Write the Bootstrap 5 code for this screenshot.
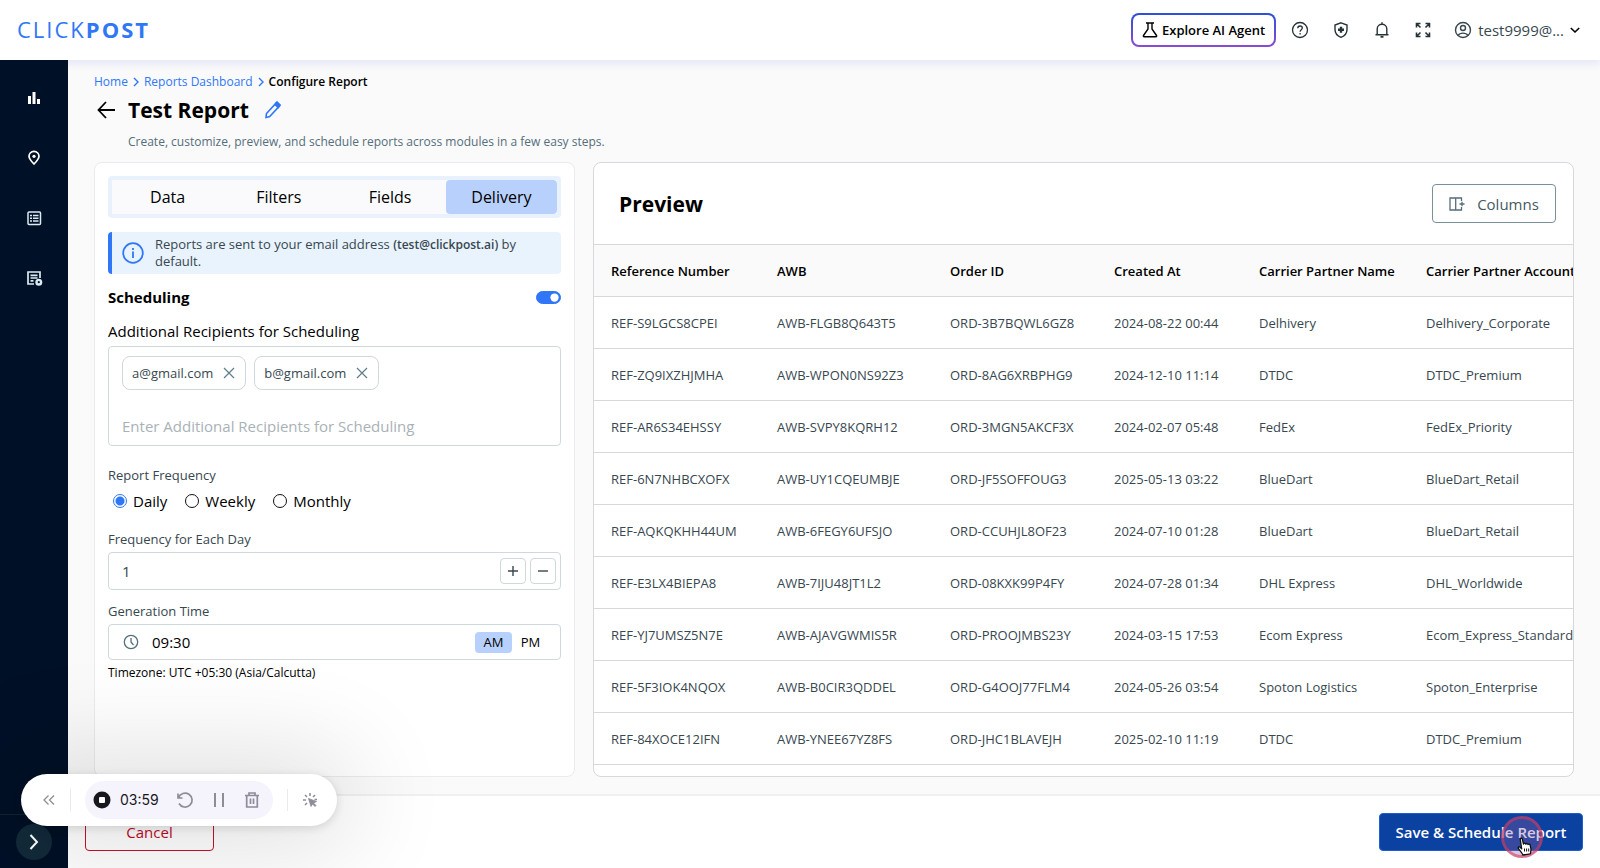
<!DOCTYPE html>
<html lang="en">
<head>
<meta charset="utf-8">
<meta name="viewport" content="width=device-width, initial-scale=1">
<title>Configure Report</title>
<link href="https://cdn.jsdelivr.net/npm/bootstrap@5.3.0/dist/css/bootstrap.min.css" rel="stylesheet">
<style>
:root { --ink: #37474f; --brand: #2f77f6; --line: #cfd8dc; --navy: #001026; }
body { font-family: "Open Sans", "Noto Sans", sans-serif; font-size: 14px; line-height: 20px; color: #000; background: #fafafa; }
a { text-decoration: none; color: var(--brand); }
svg { display: block; flex: none; }
button { color: inherit; }
.plain { background: none; border: 0; padding: 0; }
.shell { height: 100vh; }
.topbar { height: 60px; padding: 0 20px 0 17px; background: #fff; position: relative; z-index: 2; box-shadow: 0 4px 8px #e4e6f7; }
.logo { font-size: 22px; line-height: 30px; letter-spacing: 2px; font-weight: 400; padding-bottom: 2px; }
.logo b { font-weight: 700; }
.tools { gap: 21px; color: #263238; }
.explore { height: 34px; border: 2px solid transparent; border-radius: 8px; background: linear-gradient(#fff, #fff) padding-box, linear-gradient(#2b50d8, #8a4bd0) border-box; font-size: 13px; font-weight: 600; padding: 0 9px; gap: 4px; color: #000; margin-right: -7px; }
.account { font-size: 15px; gap: 6px; color: var(--ink); }
.rail { width: 68px; background: var(--navy); color: #fff; padding-top: 28px; position: relative; z-index: 3; }
.rail-list { gap: 40px; }
.rail-foot { border-top: 1px solid #0d2434; height: 54px; padding-top: 9px; }
.round { width: 36px; height: 36px; border-radius: 50%; background: #122a3a; color: #fff; }
.page { padding: 13px 26px 17px; }
.crumbs { font-size: 12px; line-height: 18px; gap: 4px; }
.title { font-size: 21px; line-height: 30px; font-weight: 700; margin-left: 10px; }
.hint { font-size: 12px; line-height: 18px; color: #546e7a; padding-left: 34px; }
.panes { gap: 18px; margin-top: 11px; }
.pane { background: #fff; border: 1px solid #e9ebef; border-radius: 8px; }
.pane-form { flex: 0 0 481px; padding: 13px; }
.pane-view { border-color: #d6d8dc; min-width: 0; overflow: hidden; }
.tabs { border: 4px solid #e9f2fc; border-radius: 4px; background: #fafafc; }
.tabs button { font-size: 16px; line-height: 22px; height: 34px; border-radius: 4px; }
.tabs .active { background: #b8d1fc; }
.notice { margin-top: 14px; height: 42px; background: #e9f3fd; border-left: 4px solid var(--brand); border-radius: 4px; color: var(--ink); font-size: 13px; line-height: 17px; padding: 0 20px 0 10px; gap: 11px; }
.mail { font-size: 12px; font-weight: 600; }
.subhead { font-size: 15px; line-height: 22px; font-weight: 700; margin: 12px 0; }
.form-switch .form-check-input.slide { width: 25px; height: 13px; margin: 0; background-color: var(--brand); border-color: var(--brand); box-shadow: none; }
.lbl { font-size: 15px; line-height: 22px; }
.lbl-sm { font-size: 13px; line-height: 18px; color: var(--ink); }
.box { border: 1px solid var(--line); border-radius: 4px; }
.box input { border: 0; outline: 0; background: none; min-width: 0; padding: 0; }
.recipients { height: 100px; padding: 9px 13px 8px; margin-top: 4px; }
.recipients input { font-size: 15px; line-height: 22px; }
.recipients input::placeholder { color: #a9b2b7; }
.chip { height: 34px; border: 1px solid var(--line); border-radius: 8px; padding: 0 10px 0 9px; gap: 10px; font-size: 13px; color: var(--ink); }
.radios { gap: 18px; font-size: 15px; line-height: 22px; padding-left: 5px; margin: 4px 0 18px; }
.radios label { gap: 6px; }
.radios input { appearance: none; width: 14px; height: 14px; border: 1px solid #111; border-radius: 50%; margin: 0; outline: 0; }
.radios input:checked { border: 1px solid var(--brand); background: radial-gradient(circle, var(--brand) 0 4px, #fff 5px); }
.freq-legend { margin-bottom: 6px; }
.stepper { height: 38px; padding: 0 4px 0 13px; gap: 4px; margin-top: 4px; }
.stepper input { font-size: 15px; color: var(--ink); }
.step { width: 26px; height: 26px; border: 1px solid var(--line); border-radius: 4px; color: var(--ink); }
.clock { height: 36px; padding: 0 11px 0 14px; margin-top: 4px; }
.clock input { font-size: 15px; margin-left: 13px; }
.ampm { font-size: 13px; font-weight: 500; height: 21px; line-height: 20px; width: 37px; border-radius: 4px; }
.ampm.on { background: #b8d1fc; }
.zone { font-size: 12px; line-height: 18px; margin-top: 4px; }
.view-head { padding: 0 17px 0 25px; height: 81px; flex: none; }
.view-head h2 { font-size: 21px; line-height: 30px; font-weight: 700; }
.cols-btn { width: 124px; height: 39px; border: 1px solid #78909c; border-radius: 4px; background: #fff; color: #455a64; font-size: 15px; gap: 12px; }
.grid-table { width: 1120px; table-layout: fixed; font-size: 13px; margin: 0; white-space: nowrap; }
.grid-table th, .grid-table td { height: 52px; padding: 0 0 0 17px; border-top: 1px solid #d6d8dc; vertical-align: middle; }
.grid-table th { background: #fafafa; font-weight: 600; }
.grid-table td { color: #37474f; }
.grid-table tbody { border-bottom: 1px solid #d6d8dc; }
.actions { height: 74px; background: #fff; border-top: 2px solid #f0f0f2; padding: 0 17px; }
.cancel { width: 129px; height: 38px; border: 1px solid #c8102e; border-radius: 4px; background: none; color: #c00a26; font-size: 15px; font-weight: 500; }
.save { width: 204px; height: 38px; border: 1px solid #1d5fd0; border-radius: 4px; background: #0b41a0; color: #fff; font-size: 15px; font-weight: 600; }
.ring { position: absolute; width: 42px; height: 42px; right: 40px; top: 3px; border: 3px solid #d63a5e99; border-radius: 50%; background: #8c5a9c55; pointer-events: none; }
.hand { position: absolute; right: 50px; top: 24px; pointer-events: none; }
.recorder { position: absolute; left: 21px; bottom: 42px; z-index: 5; height: 52px; width: 316px; background: #fff; border-radius: 26px; box-shadow: 0 0 100px 20px #0002, 0 2px 10px #0002; padding: 0 19px 0 21px; color: #8d8c99; }
.pill { background: #f5f3fc; border-radius: 19px; height: 38px; width: 188px; padding: 0 8px; gap: 17px; }
.pill time { color: #18181f; font-family: Inter, "Open Sans", sans-serif; font-size: 14px; margin-left: -8px; }
.divide { width: 1px; height: 22px; background: #e9e9ef; }
</style>
</head>
<body>
<svg class="d-none" aria-hidden="true">
  <symbol id="sep" viewBox="0 0 8 12"><path d="M2 2l4 4-4 4" fill="none" stroke="#2f77f6" stroke-width="1.4"/></symbol>
  <symbol id="x" viewBox="0 0 12 12"><path d="M1 1l10 10M11 1L1 11" stroke="#607d8b" stroke-width="1.2"/></symbol>
</svg>
<div class="shell d-flex flex-column overflow-hidden position-relative">
  <header class="topbar d-flex align-items-center justify-content-between">
    <a href="#" class="logo">CLICK<b>POST</b></a>
    <div class="tools d-flex align-items-center">
      <button class="explore d-flex align-items-center"><svg width="16" height="16" viewBox="0 0 16 16" fill="none" stroke="#000" stroke-width="1.4"><path d="M4 1h8M6 1v6L1.500 13.500a.8.800 0 0 0 .7 1.300h11.600a.8.800 0 0 0 .7-1.300L10 7V1"/></svg>Explore AI Agent</button>
      <button class="plain" aria-label="Help"><svg width="20" height="20" viewBox="0 0 20 20" fill="none" stroke="currentColor" stroke-width="1.300"><circle cx="10" cy="10" r="7.500"/><path d="M7.800 8.200c0-3 4.500-2.800 4.500-.2 0 1.600-2.200 1.800-2.200 3.700M10.100 13v1.500"/></svg></button>
      <button class="plain" aria-label="Security"><svg width="20" height="20" viewBox="0 0 20 20" fill="none" stroke="currentColor" stroke-width="1.400"><path d="M10 2.800l6 2.200v4.500c0 3.800-2.500 6.500-6 7.800-3.500-1.300-6-4-6-7.800V5z"/><path d="M10 6.800v6M7 9.800h6" stroke-width="2.400"/></svg></button>
      <button class="plain" aria-label="Notifications"><svg width="20" height="20" viewBox="0 0 20 20" fill="none" stroke="currentColor" stroke-width="1.400"><path d="M3.500 14.800h13M5.200 14.500V9c0-6.300 9.600-6.300 9.600 0v5.500M10 2.300v2"/><path d="M8.500 16.800h3" stroke-width="1.800"/></svg></button>
      <button class="plain" aria-label="Full screen"><svg width="20" height="20" viewBox="0 0 20 20" fill="none" stroke="currentColor" stroke-width="1.600"><path d="M3.500 7.500v-4h4M3.500 3.500l4 4M12.500 3.500h4v4M16.500 3.500l-4 4M3.500 12.500v4h4M3.500 16.500l4-4M16.500 12.500v4h-4M16.500 16.500l-4-4"/></svg></button>
      <button class="plain account d-flex align-items-center"><svg width="18" height="18" viewBox="0 0 18 18" fill="none" stroke="currentColor" stroke-width="1.400"><circle cx="9" cy="9" r="7.500"/><circle cx="9" cy="7" r="2.500"/><path d="M4 14.500c2-3.200 8-3.200 10 0"/></svg>test9999@...<svg width="10" height="10" viewBox="0 0 10 10" fill="none" stroke="#000" stroke-width="1.600"><path d="M.8 3L5 7l4.200-4"/></svg></button>
    </div>
  </header>
  <div class="d-flex flex-fill overflow-hidden">
    <nav class="rail d-flex flex-column justify-content-between flex-shrink-0" aria-label="Main">
      <div class="rail-list d-flex flex-column align-items-center">
        <a href="#" aria-label="Analytics"><svg width="20" height="20" viewBox="0 0 20 20" fill="#fff"><path d="M4 8h3v8H4zM8.500 4h3v12h-3zM13 11h3v5h-3z"/></svg></a>
        <a href="#" aria-label="Tracking"><svg width="20" height="20" viewBox="0 0 20 20" fill="none" stroke="#fff" stroke-width="1.700"><path d="M10 16c-3-3-5-5.200-5-7.700a5 5 0 0 1 10 0c0 2.500-2 4.700-5 7.700z"/><circle cx="10" cy="8.300" r="1.600" fill="#fff" stroke="none"/></svg></a>
        <a href="#" aria-label="Orders"><svg width="20" height="20" viewBox="0 0 20 20" fill="none" stroke="#dcebf2" stroke-width="1.500"><rect x="4" y="4" width="12.500" height="12.500" rx="1"/><path d="M6 7.500h2M9 7.500h5.500M6 10.300h2M9 10.300h5.500M6 13h2M9 13h5.500"/></svg></a>
        <a href="#" aria-label="Reports"><svg width="20" height="20" viewBox="0 0 20 20" fill="none" stroke="#dcebf2" stroke-width="1.700"><path d="M10 16H4V4h12v6M6.500 7.300h7M6.500 10h7M6.500 12.800h3"/><circle cx="14.800" cy="14.200" r="2.300" stroke-width="2.400"/></svg></a>
      </div>
      <div class="rail-foot d-flex justify-content-center"><button class="plain round d-flex align-items-center justify-content-center" aria-label="Expand menu"><svg width="10" height="16" viewBox="0 0 10 16" fill="none" stroke="#fff" stroke-width="2"><path d="M1.500 1l6.500 7-6.500 7"/></svg></button></div>
    </nav>
    <div class="d-flex flex-column flex-fill overflow-hidden">
      <main class="page d-flex flex-column flex-fill overflow-hidden">
        <nav class="crumbs d-flex align-items-center" aria-label="Breadcrumb"><a href="#">Home</a><svg width="8" height="12"><use href="#sep"/></svg><a href="#">Reports Dashboard</a><svg width="8" height="12"><use href="#sep"/></svg><span class="fw-semibold">Configure Report</span></nav>
        <div class="d-flex align-items-center mt-1">
          <button class="plain" aria-label="Back"><svg width="24" height="24" viewBox="0 0 24 24" fill="none" stroke="#000" stroke-width="1.800"><path d="M12 4l-7.500 8 7.500 8M4.500 12H21"/></svg></button>
          <h1 class="title mb-0 me-3">Test Report</h1>
          <button class="plain" aria-label="Rename"><svg width="16" height="18" viewBox="0 0 16 18" fill="none" stroke="#2f77f6" stroke-width="1.600"><path d="M1 16.500l.5-4L11 2.200l3.200 3L4.700 15.500z"/><path d="M10 3.500L12 1l3.200 3-2 2.500z" fill="#2f77f6"/></svg></button>
        </div>
        <p class="hint mb-0 mt-2">Create, customize, preview, and schedule reports across modules in a few easy steps.</p>
        <div class="panes d-flex flex-fill overflow-hidden">
          <section class="pane pane-form overflow-hidden">
            <div class="tabs d-flex" role="tablist">
              <button class="plain flex-fill w-25" role="tab">Data</button><button class="plain flex-fill w-25" role="tab">Filters</button><button class="plain flex-fill w-25" role="tab">Fields</button><button class="plain flex-fill w-25 active" role="tab" aria-selected="true">Delivery</button>
            </div>
            <div class="notice d-flex align-items-center"><svg width="22" height="22" viewBox="0 0 22 22" fill="none" stroke="#2f77f6" stroke-width="1.800"><circle cx="11" cy="11" r="9.800"/><path d="M11 9.500V16M11 6v2"/></svg><div>Reports are sent to your email address <span class="mail">(test@clickpost.ai)</span> by<br>default.</div></div>
            <div class="d-flex align-items-center justify-content-between"><label for="sched" class="subhead">Scheduling</label><div class="form-switch p-0 d-flex m-0"><input class="form-check-input slide" type="checkbox" role="switch" id="sched" checked></div></div>
            <label class="lbl d-block" for="rcpt">Additional Recipients for Scheduling</label>
            <div class="box recipients d-flex flex-column justify-content-between">
              <div class="d-flex gap-2"><span class="chip d-flex align-items-center">a@gmail.com<button class="plain" aria-label="Remove a@gmail.com"><svg width="12" height="12"><use href="#x"/></svg></button></span><span class="chip d-flex align-items-center">b@gmail.com<button class="plain" aria-label="Remove b@gmail.com"><svg width="12" height="12"><use href="#x"/></svg></button></span></div>
              <input id="rcpt" type="text" placeholder="Enter Additional Recipients for Scheduling">
            </div>
            <fieldset class="mt-3 pt-1">
              <legend class="lbl-sm freq-legend">Report Frequency</legend>
              <div class="radios d-flex"><label class="d-flex align-items-center"><input type="radio" name="freq" checked>Daily</label><label class="d-flex align-items-center"><input type="radio" name="freq">Weekly</label><label class="d-flex align-items-center"><input type="radio" name="freq">Monthly</label></div>
            </fieldset>
            <label class="lbl-sm d-block" for="perday">Frequency for Each Day</label>
            <div class="box stepper d-flex align-items-center"><input class="flex-fill" id="perday" type="text" value="1"><button class="plain step d-flex align-items-center justify-content-center" aria-label="Increase"><svg width="12" height="12" stroke="currentColor" stroke-width="1.400"><path d="M6 1v10M1 6h10"/></svg></button><button class="plain step d-flex align-items-center justify-content-center" aria-label="Decrease"><svg width="12" height="12" stroke="currentColor" stroke-width="1.400"><path d="M1 6h10"/></svg></button></div>
            <label class="lbl-sm d-block mt-2 pt-1" for="gen">Generation Time</label>
            <div class="box clock d-flex align-items-center"><svg width="16" height="16" viewBox="0 0 16 16" fill="none" stroke="#546e7a" stroke-width="1.300"><circle cx="8" cy="8" r="6.700"/><path d="M8 4v4l2.500 3"/></svg><input class="flex-fill" id="gen" type="text" value="09:30"><button class="plain ampm on">AM</button><button class="plain ampm">PM</button></div>
            <p class="zone mb-0">Timezone: UTC +05:30 (Asia/Calcutta)</p>
          </section>
          <section class="pane pane-view flex-fill d-flex flex-column">
            <div class="view-head d-flex align-items-center justify-content-between"><h2 class="mb-0">Preview</h2><button class="cols-btn d-flex align-items-center justify-content-center"><svg width="16" height="14" viewBox="0 0 16 14" fill="none" stroke="#546e7a" stroke-width="1.300"><path d="M12.500 4V1H1v12h11.500v-3M6.700 1v12M10.500 7H15.500M13 4.800v4.400"/></svg>Columns</button></div>
            <table class="grid-table">
              <colgroup><col width="166"><col width="173"><col width="164"><col width="145"><col width="167"><col></colgroup>
              <thead><tr><th>Reference Number</th><th>AWB</th><th>Order ID</th><th>Created At</th><th>Carrier Partner Name</th><th>Carrier Partner Account</th></tr></thead>
              <tbody>
                <tr><td>REF-S9LGCS8CPEI</td><td>AWB-FLGB8Q643T5</td><td>ORD-3B7BQWL6GZ8</td><td>2024-08-22 00:44</td><td>Delhivery</td><td>Delhivery_Corporate</td></tr>
                <tr><td>REF-ZQ9IXZHJMHA</td><td>AWB-WPON0NS92Z3</td><td>ORD-8AG6XRBPHG9</td><td>2024-12-10 11:14</td><td>DTDC</td><td>DTDC_Premium</td></tr>
                <tr><td>REF-AR6S34EHSSY</td><td>AWB-SVPY8KQRH12</td><td>ORD-3MGN5AKCF3X</td><td>2024-02-07 05:48</td><td>FedEx</td><td>FedEx_Priority</td></tr>
                <tr><td>REF-6N7NHBCXOFX</td><td>AWB-UY1CQEUMBJE</td><td>ORD-JF5SOFFOUG3</td><td>2025-05-13 03:22</td><td>BlueDart</td><td>BlueDart_Retail</td></tr>
                <tr><td>REF-AQKQKHH44UM</td><td>AWB-6FEGY6UFSJO</td><td>ORD-CCUHJL8OF23</td><td>2024-07-10 01:28</td><td>BlueDart</td><td>BlueDart_Retail</td></tr>
                <tr><td>REF-E3LX4BIEPA8</td><td>AWB-7IJU48JT1L2</td><td>ORD-08KXK99P4FY</td><td>2024-07-28 01:34</td><td>DHL Express</td><td>DHL_Worldwide</td></tr>
                <tr><td>REF-YJ7UMSZ5N7E</td><td>AWB-AJAVGWMIS5R</td><td>ORD-PROOJMBS23Y</td><td>2024-03-15 17:53</td><td>Ecom Express</td><td>Ecom_Express_Standard</td></tr>
                <tr><td>REF-5F3IOK4NQOX</td><td>AWB-B0CIR3QDDEL</td><td>ORD-G4OOJ77FLM4</td><td>2024-05-26 03:54</td><td>Spoton Logistics</td><td>Spoton_Enterprise</td></tr>
                <tr><td>REF-84XOCE12IFN</td><td>AWB-YNEE67YZ8FS</td><td>ORD-JHC1BLAVEJH</td><td>2025-02-10 11:19</td><td>DTDC</td><td>DTDC_Premium</td></tr>
              </tbody>
            </table>
          </section>
        </div>
      </main>
      <footer class="actions d-flex align-items-center justify-content-between flex-shrink-0">
        <button class="cancel">Cancel</button>
        <div class="position-relative"><button class="save">Save &amp; Schedule Report</button><span class="ring"></span>
          <svg class="hand" width="16" height="19" viewBox="0 0 16 19" fill="#fff" stroke="#111" stroke-width="1.300" stroke-linejoin="round"><path d="M5.800 18c-.3-2.200-3-4-4.400-6.600-.7-1.500.8-2 1.800-1l1.500 1.500L3.300 2.600C3 1 4.900.7 5.300 2.200l1.200 4.900c.2-1.200 2-1.200 2.300.1.500-1 2-.9 2.200.3.800-.7 2-.3 2.200.8l.7 3.300c.3 2-.3 3.600-.6 5.300z"/><path d="M7.500 11.500v3M9.600 11.500v3M11.700 11.500v3" stroke-width="1"/></svg></div>
      </footer>
    </div>
  </div>
  <div class="recorder d-flex align-items-center justify-content-between">
    <button class="plain" aria-label="Collapse"><svg width="14" height="12" viewBox="0 0 14 12" fill="none" stroke="currentColor" stroke-width="1.300"><path d="M6.500 1.500L2 6l4.500 4.500M12 1.500L7.500 6l4.500 4.500"/></svg></button>
    <span class="divide"></span>
    <div class="pill d-flex align-items-center">
      <button class="plain" aria-label="Stop"><svg width="18" height="18" viewBox="0 0 18 18"><circle cx="9" cy="9" r="8.500" fill="#18181f"/><rect x="6" y="6" width="6" height="6" rx="1" fill="#fff"/></svg></button>
      <time>03:59</time>
      <button class="plain" aria-label="Restart"><svg width="18" height="18" viewBox="0 0 18 18" fill="none" stroke="currentColor" stroke-width="1.700"><path d="M2 2.500V7h4.500M2.500 6.800A7 7 0 1 1 3 12.500"/></svg></button>
      <button class="plain" aria-label="Pause"><svg width="16" height="18" viewBox="0 0 16 18" stroke="currentColor" stroke-width="2"><path d="M4 2v14M12 2v14"/></svg></button>
      <button class="plain" aria-label="Delete"><svg width="16" height="18" viewBox="0 0 16 18" fill="none" stroke="currentColor" stroke-width="1.700"><path d="M1 4.500h14M5 4.500V2h6v2.500M2.700 4.500V16h10.600V4.500M6.500 7.500v5.500M9.500 7.500v5.500"/></svg></button>
    </div>
    <span class="divide"></span>
    <button class="plain" aria-label="Highlight clicks"><svg width="16" height="16" viewBox="0 0 16 16" fill="none" stroke="currentColor" stroke-width="1.500"><path d="M8 1v3M3 3l2 2M1 8h3M3 13l2-2M13 3l-2 2M12.500 7.500h2.500"/><path d="M6.500 6.500l8 3-3 1.500 2.500 2.500-1 1-2.500-2.500-1.500 2.500z" fill="currentColor" stroke-width=".8"/></svg></button>
  </div>
</div>
<script src="https://cdn.jsdelivr.net/npm/bootstrap@5.3.0/dist/js/bootstrap.bundle.min.js"></script>
</body>
</html>
